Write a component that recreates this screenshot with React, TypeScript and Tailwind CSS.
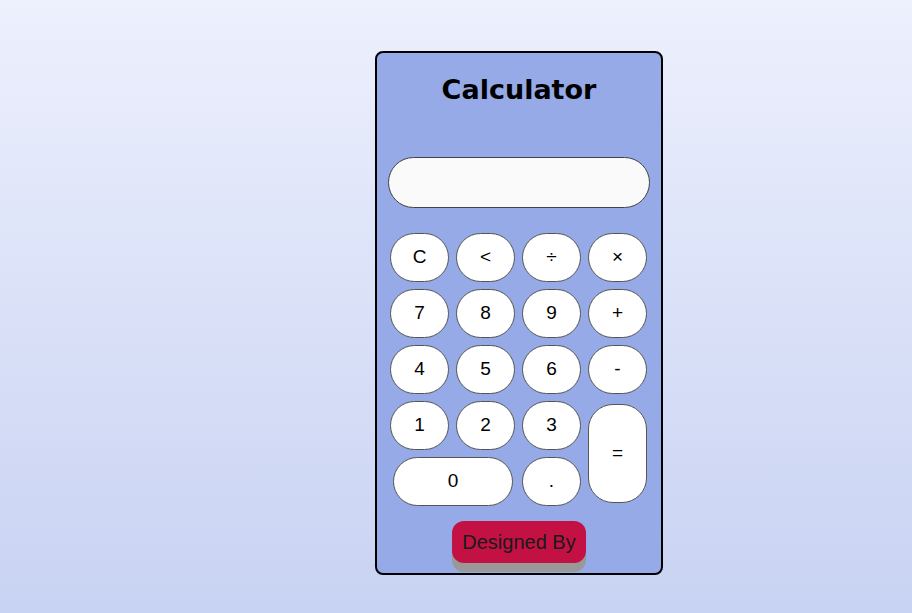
const keys = [
  { label: "C", cls: "" },
  { label: "<", cls: "" },
  { label: "÷", cls: "" },
  { label: "×", cls: "" },
  { label: "7", cls: "" },
  { label: "8", cls: "" },
  { label: "9", cls: "" },
  { label: "+", cls: "" },
  { label: "4", cls: "" },
  { label: "5", cls: "" },
  { label: "6", cls: "" },
  { label: "-", cls: "" },
  { label: "1", cls: "" },
  { label: "2", cls: "" },
  { label: "3", cls: "" },
  { label: "=", cls: "row-span-2 mt-[3px] mb-[3px]" },
  { label: "0", cls: "col-span-2 ml-[3px] mr-[2px]" },
  { label: ".", cls: "" },
];

export default function App() {
  return (
    <div className="min-h-[613px] w-full bg-gradient-to-b from-[#edf0fd] to-[#c8d2f2] pl-[375px] pt-[51px] font-['Liberation_Sans',Arial,sans-serif]">
      <div className="w-[288px] h-[524px] bg-[#95aae6] border-2 border-black rounded-[8px] flex flex-col items-center">
        <h1 className="mt-[17px] h-[40px] text-[27px] leading-[40px] font-bold text-black font-['Comic_Sans_MS','DejaVu_Sans',cursive]">
          Calculator
        </h1>

        {/* display */}
        <div className="mt-[47px] w-[262px] h-[51px] rounded-full bg-[#fafafa] border border-[#444]" />

        {/* keys */}
        <div className="mt-[25px] self-start ml-[13px] grid grid-cols-[repeat(4,59px)] grid-rows-[repeat(5,49px)] gap-[7px]">
          {keys.map((k) => (
            <button
              key={k.label}
              className={`bg-white border border-[#555] rounded-[25px] text-[19px] text-black flex items-center justify-center ${k.cls}`}
            >
              {k.label}
            </button>
          ))}
        </div>

        <button className="mt-[15px] w-[134px] h-[42px] rounded-[12px] bg-[#c41144] text-[20px] text-[#1a1a1a] shadow-[0_9px_0_#999]">
          Designed By
        </button>
      </div>
    </div>
  );
}
